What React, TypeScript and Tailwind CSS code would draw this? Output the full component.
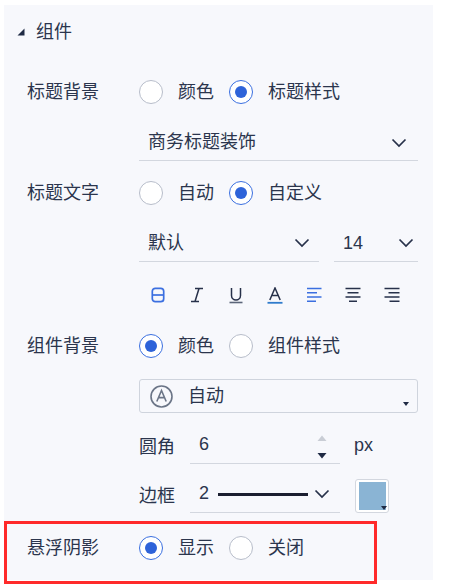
import React from "react";

const font = { fontFamily: '"Liberation Sans", "Noto Sans CJK SC", sans-serif' };

type radioProps = { checked?: boolean; label: string };

const Radio = ({ checked, label }: radioProps) => (
  <div className="flex items-center">
    <div
      className={
        checked
          ? "flex h-[24px] w-[24px] items-center justify-center rounded-full border border-[#3a6fe0] bg-white"
          : "h-[24px] w-[24px] rounded-full border border-[#b7bdca] bg-white"
      }
    >
      {checked && <div className="h-[12px] w-[12px] rounded-full bg-[#2e63d9]" />}
    </div>
    <span className="ml-[15px] mr-[15px]">{label}</span>
  </div>
);

const Chevron = () => (
  <svg width="16" height="10" viewBox="0 0 16 10" fill="none">
    <path d="M1.5 1.5 L8 8 L14.5 1.5" stroke="#27314a" strokeWidth="1.7" />
  </svg>
);

type rowProps = { label: string; h: string; children: React.ReactNode };

const Row = ({ label, h, children }: rowProps) => (
  <div className={`flex items-center pl-[23px] ${h}`}>
    <div className="w-[112px]">{label}</div>
    {children}
  </div>
);

const FormatIcons = () => {
  const blue = "#3b6fe0";
  const dark = "#27314a";
  return (
    <div className="flex h-[66px] items-center pl-[134px]">
      {/* bold */}
      <div className="flex w-[39px] justify-center">
        <svg width="16" height="16" viewBox="0 0 16 16" fill="none">
          <rect x="2.3" y="1.3" width="11.4" height="13.4" rx="3" stroke={blue} strokeWidth="1.7" />
          <path d="M2.3 8 H13.7" stroke={blue} strokeWidth="1.7" />
        </svg>
      </div>
      {/* italic */}
      <div className="flex w-[39px] justify-center">
        <svg width="16" height="16" viewBox="0 0 16 16" fill="none">
          <path d="M6 1.5 H14 M2 14.5 H10 M10 1.5 L6 14.5" stroke={dark} strokeWidth="1.5" />
        </svg>
      </div>
      {/* underline */}
      <div className="flex w-[39px] justify-center">
        <svg width="16" height="17" viewBox="0 0 16 17" fill="none">
          <path d="M3.5 1 V8.5 a4.5 4.5 0 0 0 9 0 V1" stroke={dark} strokeWidth="1.5" />
          <path d="M1.5 15.5 H14.5" stroke="#5b6579" strokeWidth="1.6" />
        </svg>
      </div>
      {/* font color */}
      <div className="flex w-[39px] justify-center">
        <svg width="16" height="17" viewBox="0 0 16 17" fill="none">
          <path d="M2.8 13 L8 1 L13.2 13 M4.8 8.6 H11.2" stroke={dark} strokeWidth="1.5" />
          <path d="M0.5 15.8 H15.5" stroke="#2f7bcc" strokeWidth="1.8" />
        </svg>
      </div>
      {/* align left */}
      <div className="flex w-[39px] justify-center">
        <svg width="16" height="16" viewBox="0 0 16 16" fill="none">
          <path d="M1 1.5 H15.5 M1 5.8 H11 M1 10 H15.5 M1 14.3 H10" stroke={blue} strokeWidth="1.6" />
        </svg>
      </div>
      {/* align center */}
      <div className="flex w-[39px] justify-center">
        <svg width="16" height="16" viewBox="0 0 16 16" fill="none">
          <path d="M0.5 1.5 H15.5 M2.5 5.8 H13.5 M0.5 10 H15.5 M4 14.3 H12" stroke={dark} strokeWidth="1.6" />
        </svg>
      </div>
      {/* align right */}
      <div className="flex w-[39px] justify-center">
        <svg width="16" height="16" viewBox="0 0 16 16" fill="none">
          <path d="M0.5 1.5 H15.5 M4.5 5.8 H15.5 M0.5 10 H15.5 M5.5 14.3 H15.5" stroke={dark} strokeWidth="1.6" />
        </svg>
      </div>
    </div>
  );
};

export default function App() {
  return (
    <div className="h-[585px] w-[449px] overflow-hidden bg-white text-[18px] text-[#2b354d]" style={font}>
      <div className="ml-[4px] mt-[5px] h-[575px] w-[429px] bg-[#f7f8fc]">
        {/* section header */}
        <div className="flex h-[54px] items-center pl-[13px]">
          <svg width="8" height="8" viewBox="0 0 8 8">
            <polygon points="7.5,0.5 7.5,7.5 0.5,7.5" fill="#1f2a44" />
          </svg>
          <span className="ml-[11px]">组件</span>
        </div>

        <Row label="标题背景" h="h-[66px]">
          <Radio label="颜色" />
          <Radio checked label="标题样式" />
        </Row>

        <div className="pl-[135px]">
          <div className="flex h-[36px] w-[279px] items-center justify-between border-b border-[#d3d7df] pl-[9px] pr-[11px]">
            <span>商务标题装饰</span>
            <Chevron />
          </div>
        </div>

        <Row label="标题文字" h="h-[64px]">
          <Radio label="自动" />
          <Radio checked label="自定义" />
        </Row>

        <div className="flex gap-[15px] pl-[135px]">
          <div className="flex h-[37px] w-[180px] items-center justify-between border-b border-[#d3d7df] pl-[9px] pr-[9px]">
            <span>默认</span>
            <Chevron />
          </div>
          <div className="flex h-[37px] w-[84px] items-center justify-between border-b border-[#d3d7df] pl-[9px] pr-[4px]">
            <span>14</span>
            <Chevron />
          </div>
        </div>

        <FormatIcons />

        <Row label="组件背景" h="h-[36px]">
          <Radio checked label="颜色" />
          <Radio label="组件样式" />
        </Row>

        <div className="mt-[15px] pl-[135px]">
          <div className="relative flex h-[34px] w-[279px] items-center rounded-[3px] border border-[#cfd4dd] pl-[10px]">
            <svg width="23" height="23" viewBox="0 0 23 23" fill="none">
              <circle cx="11.5" cy="11.5" r="10.5" stroke="#6b7587" strokeWidth="1.6" />
              <path d="M6.8 16.5 L11.5 5.5 L16.2 16.5 M8.6 12.6 H14.4" stroke="#6b7587" strokeWidth="1.6" />
            </svg>
            <span className="ml-[15px]">自动</span>
            <svg className="absolute bottom-[6px] right-[8px]" width="6" height="4" viewBox="0 0 6 4">
              <polygon points="0,0 6,0 3,4" fill="#1f2a44" />
            </svg>
          </div>
        </div>

        <div className="mt-[17px] flex items-center pl-[135px]">
          <span className="w-[51px]">圆角</span>
          <div className="relative flex h-[34px] w-[150px] items-center border-b border-[#d3d7df] pl-[9px]">
            <span className="-mt-[4px]">6</span>
            <svg className="absolute right-[13px] top-[4px]" width="10" height="26" viewBox="0 0 10 26">
              <polygon points="0.5,7 9.5,7 5,1.5" fill="#c9cdd5" />
              <polygon points="0.5,19 9.5,19 5,24.5" fill="#1f2a44" />
            </svg>
          </div>
          <span className="ml-[14px] -mt-[4px]">px</span>
        </div>

        <div className="mt-[15px] flex items-center pl-[135px]">
          <span className="w-[51px]">边框</span>
          <div className="flex h-[34px] w-[150px] items-center border-b border-[#d3d7df] pl-[9px]">
            <span className="-mt-[4px]">2</span>
            <div className="-mt-[3px] ml-[9px] h-[3px] w-[90px] bg-[#1b1f30]" />
            <div className="-mt-[3px] ml-[6px]">
              <Chevron />
            </div>
          </div>
          <div className="relative ml-[15px] flex h-[34px] w-[34px] items-center justify-center rounded-[3px] border border-[#d3d7df] bg-white">
            <div className="h-[28px] w-[27px] bg-[#8ab4d4]" />
            <svg className="absolute bottom-[2px] right-[1px]" width="6" height="4" viewBox="0 0 6 4">
              <polygon points="0,0 6,0 3,4" fill="#1f2a44" />
            </svg>
          </div>
        </div>

        <div className="mt-[8px] -ml-0 flex h-[63px] w-[373px] items-center border-[3px] border-[#ff2a2a] pb-[9px] pl-[20px]">
          <div className="w-[112px]">悬浮阴影</div>
          <Radio checked label="显示" />
          <Radio label="关闭" />
        </div>
      </div>
    </div>
  );
}
